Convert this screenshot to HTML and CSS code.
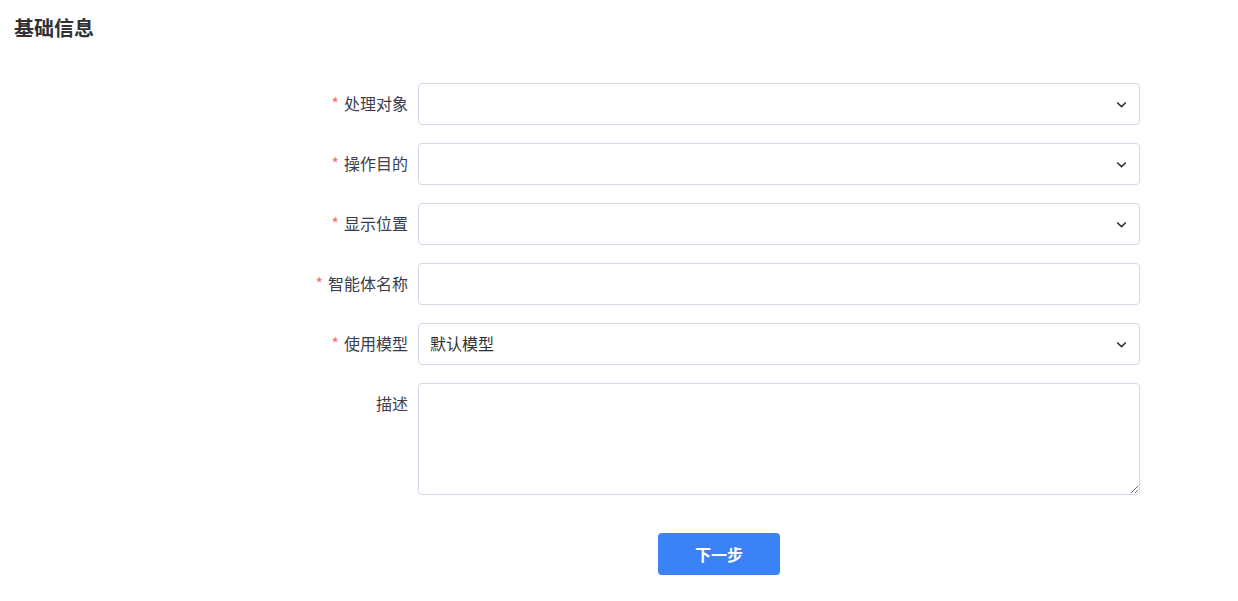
FILE: index.html
```html
<!DOCTYPE html>
<html lang="zh-CN">
<head>
<meta charset="UTF-8" />
<meta name="viewport" content="width=device-width, initial-scale=1" />
<title>基础信息</title>
<link rel="stylesheet" href="styles.css">
</head>
<body>
<h2 class="section-title">基础信息</h2>

<form class="agent-form" onsubmit="return false">
  <div class="form-row">
    <label class="form-label required">处理对象</label>
    <div class="select-box"><span class="select-value"></span><svg class="chevron" viewBox="0 0 12 12"><path d="M2 4.2 6 8l4-3.8" /></svg></div>
  </div>
  <div class="form-row">
    <label class="form-label required">操作目的</label>
    <div class="select-box"><span class="select-value"></span><svg class="chevron" viewBox="0 0 12 12"><path d="M2 4.2 6 8l4-3.8" /></svg></div>
  </div>
  <div class="form-row">
    <label class="form-label required">显示位置</label>
    <div class="select-box"><span class="select-value"></span><svg class="chevron" viewBox="0 0 12 12"><path d="M2 4.2 6 8l4-3.8" /></svg></div>
  </div>
  <div class="form-row">
    <label class="form-label required">智能体名称</label>
    <input class="text-input" type="text" />
  </div>
  <div class="form-row">
    <label class="form-label required">使用模型</label>
    <div class="select-box"><span class="select-value">默认模型</span><svg class="chevron" viewBox="0 0 12 12"><path d="M2 4.2 6 8l4-3.8" /></svg></div>
  </div>
  <div class="form-row">
    <label class="form-label">描述</label>
    <textarea class="text-area"></textarea>
  </div>

  <div class="form-actions">
    <button class="btn-primary" type="button">下一步</button>
  </div>
</form>
</body>
</html>
```

FILE: styles.css
```css
body {
  margin: 0; padding: 0 14px; background: #fff; color: #303133;
  font-family: "Noto Sans CJK SC", "Noto Sans", sans-serif;
}
.section-title {
  margin: 0; padding-top: 13px; font-size: 20px; line-height: 30px; font-weight: 700; color: #303133;
}
.agent-form {
  width: 842px; margin: 40px 0 0 284px;
}
.form-row {
  display: flex; align-items: flex-start; margin-bottom: 18px;
}
.form-label {
  width: 120px; height: 42px; flex: none; padding-right: 10px; box-sizing: border-box;
  text-align: right; font-size: 16px; line-height: 40px; color: #3a3d4c; white-space: nowrap;
}
.form-label.required::before {
  content: "*"; color: #f56c6c; margin-right: 5px;
}
.select-box, .text-input, .text-area {
  flex: 1; box-sizing: border-box; height: 42px; border: 1px solid #d5d8e6; border-radius: 4px;
  background: #fff; font-family: inherit; font-size: 16px; color: #303133;
}
.select-box {
  display: flex; align-items: center; padding: 0 11px;
}
.select-value {
  flex: 1; line-height: 38px; padding-bottom: 2px;
}
.chevron {
  width: 13px; height: 13px; fill: none; stroke: #303133; stroke-width: 1.4;
}
.text-input {
  padding: 0 11px; outline: none;
}
.text-area {
  height: 112px; padding: 8px 11px; resize: vertical; outline: none;
}
.form-actions {
  display: flex; justify-content: center; margin-top: 38px;
}
.btn-primary {
  width: 122px; height: 42px; border: none; border-radius: 4px; background: #3b82f6;
  color: #fff; font-family: inherit; font-size: 16px; font-weight: 700; cursor: pointer;
}
```
